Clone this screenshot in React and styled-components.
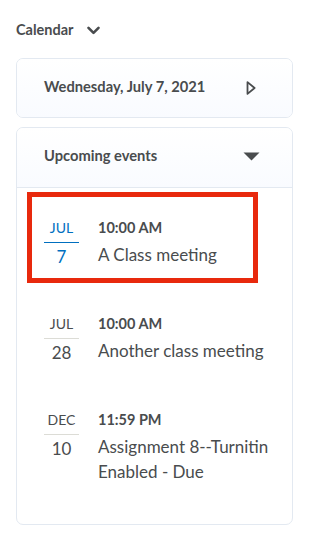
import React from "react";
import styled, { createGlobalStyle } from "styled-components";

const Global = createGlobalStyle`
  html, body { margin: 0; padding: 0; background: #ffffff; }
  body { font-family: Lato, "Open Sans", "Liberation Sans", sans-serif; color: #494c4e; }
  *, *::before, *::after { box-sizing: border-box; }
`;

const Page = styled.div`
  padding: 20px 16px 16px 16px;
  width: 309px;
`;

const Heading = styled.div`
  display: flex;
  align-items: center;
  gap: 14px;
  height: 20px;
  font-size: 14.5px;
  font-weight: 700;
  line-height: 20px;
  margin-bottom: 18px;
`;

const Card = styled.div`
  border: 1px solid #e3e9f1;
  border-radius: 7px;
  background: #ffffff;
  overflow: hidden;
  & + & { margin-top: 9px; }
`;

const CardHeader = styled.div`
  display: flex;
  align-items: center;
  justify-content: space-between;
  height: ${(p) => (p.$divided ? 60 : 58)}px;
  padding: 0 ${(p) => p.$right}px 5px 27px;
  background: linear-gradient(180deg, #ffffff 0%, #f9fbff 100%);
  border-bottom: ${(p) => (p.$divided ? "1px solid #e3e9f1" : "none")};
  font-size: 14.7px;
  font-weight: 700;
  line-height: 20px;
`;

const IconBox = styled.span`
  display: flex;
  align-items: center;
  margin-top: ${(p) => p.$shift || 0}px;
`;

const List = styled.ul`
  list-style: none;
  margin: 0;
  padding: 8px 0 17px 0;
`;

const Item = styled.li`
  position: relative;
  display: flex;
  gap: 19px;
  padding: 22px 8px 23px 27px;
  & + & { margin-top: 1px; }
  ${(p) =>
    p.$highlight &&
    `
    &::after {
      content: "";
      position: absolute;
      top: -4px;
      left: 10px;
      width: 231px;
      height: 91px;
      border: 5px solid #e8290d;
      pointer-events: none;
    }
  `}
`;

const DateCol = styled.div`
  flex: 0 0 35px;
  display: flex;
  flex-direction: column;
  align-items: center;
  color: ${(p) => (p.$active ? "#006fbf" : "#494c4e")};
`;

const Month = styled.div`
  width: 100%;
  text-align: center;
  font-size: 14px;
  line-height: 20px;
  padding-bottom: 4px;
  border-bottom: 1px solid ${(p) => (p.$active ? "#006fbf" : "#dcdcd6")};
`;

const Day = styled.div`
  font-size: 17px;
  line-height: 22px;
  margin-top: 3px;
`;

const Details = styled.div`
  display: flex;
  flex-direction: column;
  gap: 4px;
  min-width: 0;
`;

const Time = styled.div`
  font-size: 14.5px;
  font-weight: 700;
  line-height: 20px;
`;

const Title = styled.div`
  font-size: 17px;
  line-height: 25px;
`;

const Chevron = () => (
  <svg width="13" height="9" viewBox="0 0 13 9">
    <path d="M1.5 1.8 L6.5 6.8 L11.5 1.8" fill="none" stroke="#494c4e" strokeWidth="2.6" strokeLinecap="round" strokeLinejoin="round" />
  </svg>
);

const PlayOutline = () => (
  <svg width="10" height="14" viewBox="0 0 10 14">
    <path d="M1.5 1.1 L8.6 7 L1.5 12.9 Z" fill="none" stroke="#494c4e" strokeWidth="1.8" strokeLinejoin="round" />
  </svg>
);

const CaretDown = () => (
  <svg width="17" height="9" viewBox="0 0 17 9">
    <path d="M0.5 0.5 L16.5 0.5 L8.5 8.5 Z" fill="#494c4e" />
  </svg>
);

const events = [
  { month: "JUL", day: "7", time: "10:00 AM", title: "A Class meeting", active: true },
  { month: "JUL", day: "28", time: "10:00 AM", title: "Another class meeting" },
  { month: "DEC", day: "10", time: "11:59 PM", title: "Assignment 8--Turnitin Enabled - Due" },
];

export default function App() {
  return (
    <>
      <Global />
      <Page>
        <Heading>
          <span>Calendar</span>
          <Chevron />
        </Heading>
        <Card>
          <CardHeader $right={36}>
            <span>Wednesday, July 7, 2021</span>
            <IconBox $shift={5}>
              <PlayOutline />
            </IconBox>
          </CardHeader>
        </Card>
        <Card>
          <CardHeader $divided $right={32}>
            <span>Upcoming events</span>
            <IconBox $shift={2}>
              <CaretDown />
            </IconBox>
          </CardHeader>
          <List>
            {events.map((e) => (
              <Item key={e.title} $highlight={e.active}>
                <DateCol $active={e.active}>
                  <Month $active={e.active}>{e.month}</Month>
                  <Day>{e.day}</Day>
                </DateCol>
                <Details>
                  <Time>{e.time}</Time>
                  <Title>{e.title}</Title>
                </Details>
              </Item>
            ))}
          </List>
        </Card>
      </Page>
    </>
  );
}
